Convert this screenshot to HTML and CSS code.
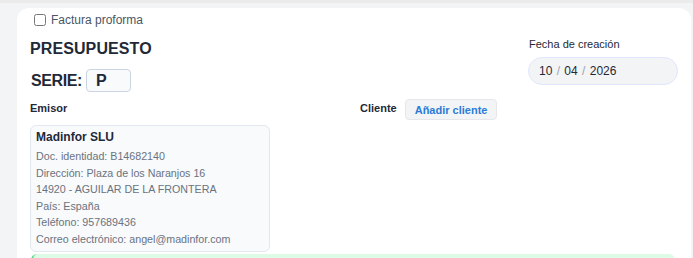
FILE: index.html
```html
<!DOCTYPE html>
<html lang="es">
<head>
    <meta charset="UTF-8">
    <meta name="viewport" content="width=device-width, initial-scale=1.0">
    <title>Presupuesto</title>
    <link rel="stylesheet" href="styles.css">
</head>
<body>
    <div class="page">
        <div class="card">
            <div class="cabecera">
                <div class="col-izq">
                    <label class="proforma">
                        <input type="checkbox" id="proforma">
                        Factura proforma
                    </label>
                    <h1>PRESUPUESTO</h1>
                    <div class="serie">
                        <span>SERIE:</span>
                        <div class="serie-input">P</div>
                    </div>
                </div>
                <div class="col-der">
                    <div class="etiqueta">Fecha de creación</div>
                    <div class="fecha">10 <span class="sep">/</span> 04 <span class="sep">/</span> 2026</div>
                </div>
            </div>

            <div class="partes">
                <div class="emisor">
                    <div class="etiqueta negrita">Emisor</div>
                    <div class="ficha">
                        <div class="ficha-nombre">Madinfor SLU</div>
                        <div class="ficha-linea">Doc. identidad: B14682140</div>
                        <div class="ficha-linea">Dirección: Plaza de los Naranjos 16</div>
                        <div class="ficha-linea">14920 - AGUILAR DE LA FRONTERA</div>
                        <div class="ficha-linea">País: España</div>
                        <div class="ficha-linea">Teléfono: 957689436</div>
                        <div class="ficha-linea">Correo electrónico: angel@madinfor.com</div>
                    </div>
                </div>
                <div class="cliente">
                    <span class="etiqueta negrita">Cliente</span>
                    <button class="btn-cliente">Añadir cliente</button>
                </div>
            </div>

            <div class="aviso"></div>
        </div>
    </div>
</body>
</html>
```

FILE: styles.css
```css
body {
    margin: 0;
    font-family: "Liberation Sans", Arial, sans-serif;
    background-color: #f3f4f6;
    overflow: hidden;
}

.page {
    border-top: 3px solid #ebebec;
    padding: 5px 2px 0 17px;
}

.card {
    background-color: #fff;
    border-radius: 12px 12px 0 0;
    padding: 5px 13px 0 13px;
    height: 260px;
    box-sizing: border-box;
}

.cabecera {
    display: flex;
    justify-content: space-between;
}

.proforma {
    display: flex;
    align-items: center;
    gap: 5px;
    height: 14px;
    font-size: 12px;
    color: #4b5563;
    margin-left: 4px;
}

.proforma input {
    width: 12px;
    height: 12px;
    margin: 0;
}

h1 {
    font-size: 16px;
    line-height: 18px;
    font-weight: bold;
    color: #1f2937;
    margin: 13px 0 0 0;
    letter-spacing: 0.1px;
}

.serie {
    display: flex;
    align-items: center;
    gap: 4px;
    margin-top: 11px;
    margin-left: 1px;
    font-size: 16px;
    font-weight: bold;
    color: #1f2937;
}

.serie span {
    letter-spacing: -0.4px;
}

.serie-input {
    width: 34px;
    height: 21px;
    line-height: 21px;
    border: 1px solid #cbd5e1;
    border-radius: 4px;
    background-color: #f8fafc;
    padding-left: 9px;
    color: #1e293b;
}

.col-der {
    margin-top: 25px;
    width: 150px;
}

.etiqueta {
    font-size: 11px;
    line-height: 13px;
    color: #1f2937;
}

.col-der .etiqueta {
    margin-left: 1px;
    margin-bottom: 6px;
}

.negrita {
    font-weight: bold;
}

.fecha {
    height: 26px;
    line-height: 26px;
    border: 1px solid #e0e7ff;
    border-radius: 14px;
    background-color: #f3f4f6;
    padding-left: 10px;
    font-size: 12px;
    color: #1f2937;
}

.sep {
    color: #9ca3af;
    margin: 0 1px;
}

.partes {
    display: grid;
    grid-template-columns: 1fr 1fr;
    column-gap: 12px;
    margin-top: 8px;
}

.emisor .etiqueta {
    padding-top: 2px;
    margin-bottom: 10px;
}

.ficha {
    border: 1px solid #e2e8f0;
    border-radius: 6px;
    background-color: #f8fafc;
    padding: 4px 5px 4px 5px;
    box-sizing: border-box;
    width: 240px;
}

.ficha-nombre {
    font-size: 12px;
    line-height: 14px;
    font-weight: bold;
    color: #1e293b;
    margin-bottom: 4px;
}

.ficha-linea {
    font-size: 10.7px;
    line-height: 16.5px;
    color: #6b7280;
}

.cliente {
    display: flex;
    align-items: flex-start;
    gap: 8px;
}

.cliente .etiqueta {
    padding-top: 2px;
}

.btn-cliente {
    font-family: inherit;
    font-size: 11px;
    font-weight: bold;
    color: #2b7bd6;
    background-color: #f3f4f6;
    border: 1px solid #e5e7eb;
    border-radius: 4px;
    height: 21px;
    padding: 0 9px;
    margin-top: -1px;
}

.aviso {
    margin: 2px 3px 0 1px;
    height: 10px;
    background-color: #dcfce7;
    border-left: 2px solid #4ade80;
    border-radius: 6px 6px 0 0;
}
```
